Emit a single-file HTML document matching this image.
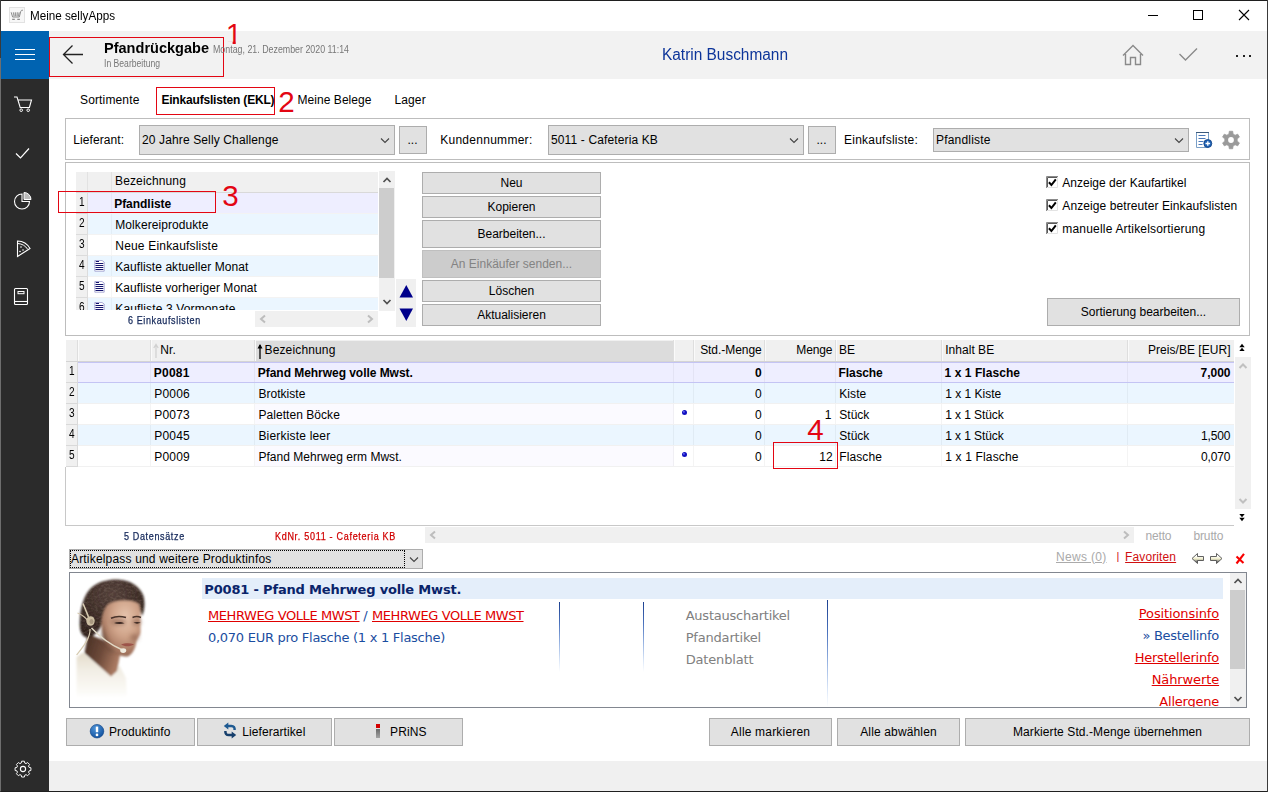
<!DOCTYPE html>
<html lang="de"><head><meta charset="utf-8"><title>Meine sellyApps</title>
<style>
html,body{margin:0;padding:0;}
body{width:1268px;height:792px;overflow:hidden;background:#fff;position:relative;font-family:"Liberation Sans",sans-serif;}
#w{position:absolute;left:0;top:0;width:1268px;height:792px;overflow:hidden;background:#fff;}
#w div,#w span,#w svg{position:absolute;box-sizing:border-box;}
.t{white-space:pre;}
.b{background:#e1e1e1;border:1px solid #adadad;}
.bd{background:#ccc;border:1px solid #bfbfbf;}
.rb{border:1px solid #e30613;}
.u{text-decoration:underline;}
</style></head>
<body><div id="w">
<div style="left:0px;top:0px;width:1268px;height:792px;background:#fff;"></div>
<div style="left:49px;top:31px;width:1218px;height:48px;background:#f2f2f2;"></div>
<div style="left:49px;top:761px;width:1218px;height:30px;background:#f0f0f0;"></div>
<div style="left:1px;top:31px;width:48px;height:48px;background:#0063b1;"></div>
<div style="left:1px;top:79px;width:48px;height:712px;background:#2b2b2b;"></div>
<div style="left:0px;top:0px;width:1268px;height:1px;background:#1f1f1f;"></div>
<div style="left:0px;top:791px;width:1268px;height:1px;background:#1f1f1f;"></div>
<div style="left:0px;top:0px;width:1px;height:792px;background:#3a3a3a;"></div>
<div style="left:0px;top:58px;width:1px;height:733px;background:#6e6e6e;"></div>
<div style="left:1267px;top:0px;width:1px;height:792px;background:#3a3a3a;"></div>
<svg style="left:9px;top:7px;" width="16" height="16" viewBox="0 0 16 16"><rect x="0.5" y="0.5" width="15" height="15" fill="#f7f7f7" stroke="#e2e2e2"/><path d="M14 3.300c-1.200-.2-2 .1-2.300 1.200L10.300 10H3.600L2.200 5.300" stroke="#8c8c8c" fill="none" stroke-width="1"/><path d="M4.300 5.300l.9 4M6.300 5.300l.3 4M8.300 5.300l-.2 4M10.200 5.300l-.8 4" stroke="#9a9a9a" fill="none" stroke-width="1.200"/><path d="M3.200 12.300h2.600M8.300 12.300h2.600" stroke="#8c8c8c" stroke-width="1.300"/></svg>
<span class="t" style="top:8.84px;font:12px/14px 'Liberation Sans',sans-serif;color:#000;left:30.00px;transform:scaleX(0.9728);transform-origin:0 0;">Meine sellyApps</span>
<svg style="left:1143px;top:5px;" width="20" height="20" viewBox="0 0 20 20"><path d="M5 10.5h10" stroke="#000" stroke-width="1"/></svg>
<svg style="left:1188px;top:5px;" width="20" height="20" viewBox="0 0 20 20"><rect x="5.5" y="5.5" width="9" height="9" fill="none" stroke="#000" stroke-width="1"/></svg>
<svg style="left:1234px;top:5px;" width="20" height="20" viewBox="0 0 20 20"><path d="M5 5l10 10M15 5l-10 10" stroke="#000" stroke-width="1.1"/></svg>
<div style="left:15px;top:49px;width:20px;height:1px;background:#fff;"></div>
<div style="left:15px;top:54px;width:20px;height:1px;background:#fff;"></div>
<div style="left:15px;top:59px;width:20px;height:1px;background:#fff;"></div>
<div class="rb" style="left:49px;top:37px;width:175px;height:40px;"></div>
<svg style="left:60px;top:42px;" width="26" height="24" viewBox="0 0 26 24"><path d="M23 12.5H4M12.5 3.5L3.5 12.5l9 9" fill="none" stroke="#222" stroke-width="1.3"/></svg>
<span class="t" style="top:38.80px;font:bold 15px/18px 'Liberation Sans',sans-serif;color:#000;left:104.00px;transform:scaleX(0.9690);transform-origin:0 0;">Pfandrückgabe</span>
<span class="t" style="top:57.36px;font:10.5px/13px 'Liberation Sans',sans-serif;color:#777;left:104.00px;transform:scaleX(0.8199);transform-origin:0 0;">In Bearbeitung</span>
<span class="t" style="top:43.36px;font:10.5px/13px 'Liberation Sans',sans-serif;color:#777;left:213.00px;transform:scaleX(0.8421);transform-origin:0 0;">Montag, 21. Dezember 2020 11:14</span>
<span class="t" style="top:45.36px;font:16px/19px 'Liberation Sans',sans-serif;color:#0d359a;left:662.00px;transform:scaleX(0.9638);transform-origin:0 0;">Katrin Buschmann</span>
<span class="t" style="top:16.40px;font:30px/36px 'Liberation Sans',sans-serif;color:#e30613;left:225.80px;clip-path:polygon(0 0,9.9px 0,9.9px 100%,6.8px 100%,6.8px 24.8px,0 24.8px);">1</span>
<svg style="left:1120px;top:42px;" width="26" height="26" viewBox="0 0 26 26"><path d="M3 13.5L13 3.5l10 10M5.5 12v10.5h5v-7h5v7h5V12" fill="none" stroke="#8a8a8a" stroke-width="1.4"/></svg>
<svg style="left:1176px;top:44px;" width="24" height="20" viewBox="0 0 24 20"><path d="M3.5 10l6 6L21 4.5" fill="none" stroke="#8a8a8a" stroke-width="1.4"/></svg>
<div style="left:1236px;top:55px;width:2px;height:2px;background:#222;"></div>
<div style="left:1243px;top:55px;width:2px;height:2px;background:#222;"></div>
<div style="left:1249px;top:55px;width:2px;height:2px;background:#222;"></div>
<svg style="left:12px;top:94px;" width="22" height="20" viewBox="0 0 22 20"><path d="M2 3h3l3.2 10.5h9.2L19.5 6H6.2" fill="none" stroke="#fff" stroke-width="1.1"/><circle cx="9.2" cy="16.2" r="1.3" fill="none" stroke="#fff" stroke-width="1"/><circle cx="16.2" cy="16.2" r="1.3" fill="none" stroke="#fff" stroke-width="1"/></svg>
<svg style="left:13px;top:144px;" width="20" height="18" viewBox="0 0 20 18"><path d="M3 9.5l4.5 4.5L16 4.5" fill="none" stroke="#fff" stroke-width="1.2"/></svg>
<svg style="left:12px;top:190px;" width="22" height="22" viewBox="0 0 22 22"><path d="M10 4a7.5 7.5 0 1 0 7.5 7.5H10z" fill="none" stroke="#fff" stroke-width="1.1"/><path d="M12 2.5a7 7 0 0 1 7 7h-7z" fill="#bbb" stroke="#fff" stroke-width="1"/></svg>
<svg style="left:14px;top:238px;" width="20" height="22" viewBox="0 0 20 22"><path d="M3.5 3c5.5 0.2 10 3 12.5 7.5L3.5 18.5z" fill="none" stroke="#fff" stroke-width="1.1"/><path d="M4 5.5c4 0.3 7.5 2.3 9.7 5.8" fill="none" stroke="#fff" stroke-width="1"/><circle cx="7" cy="9" r="0.8" fill="#fff"/><circle cx="9" cy="12" r="0.8" fill="#fff"/><circle cx="6" cy="13.5" r="0.8" fill="#fff"/></svg>
<svg style="left:12px;top:286px;" width="20" height="22" viewBox="0 0 20 22"><rect x="2.5" y="2.5" width="13" height="16" rx="1" fill="none" stroke="#fff" stroke-width="1.1"/><path d="M2.5 15.5h13" stroke="#fff" stroke-width="1.1"/><rect x="6" y="5.5" width="6" height="2.2" fill="none" stroke="#fff" stroke-width="1"/></svg>
<svg style="left:12px;top:758px;" width="22" height="22" viewBox="0 0 22 22"><path d="M9.3 2.5h3.4l.5 2.3 1.6.7 2-1.3 2.4 2.4-1.3 2 .7 1.6 2.3.5v3.4l-2.3.5-.7 1.6 1.3 2-2.4 2.4-2-1.3-1.6.7-.5 2.3H9.3l-.5-2.3-1.6-.7-2 1.3-2.4-2.4 1.3-2-.7-1.6-2.3-.5V10.700l2.3-.5.7-1.6-1.300-2 2.4-2.4 2 1.300 1.600-.7z" transform="translate(2.200,1.200) scale(0.8)" fill="none" stroke="#fff" stroke-width="1.2"/><circle cx="11" cy="11" r="2.600" fill="none" stroke="#fff" stroke-width="1.1"/></svg>
<span class="t" style="top:92.84px;font:12px/14px 'Liberation Sans',sans-serif;color:#000;letter-spacing:0.147px;left:80.00px;">Sortimente</span>
<div class="rb" style="left:156px;top:87px;width:119px;height:28px;"></div>
<span class="t" style="top:92.84px;font:bold 12px/14px 'Liberation Sans',sans-serif;color:#000;letter-spacing:-0.184px;left:161.40px;">Einkaufslisten (EKL)</span>
<span class="t" style="top:84.04px;font:29.6px/36px 'Liberation Sans',sans-serif;color:#e30613;left:278.20px;">2</span>
<span class="t" style="top:92.84px;font:12px/14px 'Liberation Sans',sans-serif;color:#000;letter-spacing:0.051px;left:297.50px;">Meine Belege</span>
<span class="t" style="top:92.84px;font:12px/14px 'Liberation Sans',sans-serif;color:#000;letter-spacing:0.142px;left:394.40px;">Lager</span>
<div style="left:65px;top:118px;width:1185px;height:42px;background:#fff;border:1px solid #bdbdbd;"></div>
<span class="t" style="top:132.54px;font:12px/14px 'Liberation Sans',sans-serif;color:#000;letter-spacing:0.097px;left:73.20px;">Lieferant:</span>
<div class="b" style="left:139px;top:125px;width:256px;height:30px;"></div>
<span class="t" style="top:133.14px;font:12px/14px 'Liberation Sans',sans-serif;color:#000;letter-spacing:0.128px;left:142.00px;">20 Jahre Selly Challenge</span>
<svg style="left:380px;top:137.0px;" width="10" height="7" viewBox="0 0 10 7"><path d="M1 1.500l4 4 4-4" fill="none" stroke="#444" stroke-width="1.100"/></svg>
<div class="b" style="left:399px;top:126px;width:28px;height:28px;"></div>
<span class="t" style="top:132.54px;font:12px/14px 'Liberation Sans',sans-serif;color:#000;left:407.50px;">...</span>
<span class="t" style="top:132.54px;font:12px/14px 'Liberation Sans',sans-serif;color:#000;letter-spacing:0.276px;left:440.20px;">Kundennummer:</span>
<div class="b" style="left:548px;top:125px;width:256px;height:30px;"></div>
<span class="t" style="top:133.14px;font:12px/14px 'Liberation Sans',sans-serif;color:#000;letter-spacing:0.131px;left:551.00px;">5011 - Cafeteria KB</span>
<svg style="left:789px;top:137.0px;" width="10" height="7" viewBox="0 0 10 7"><path d="M1 1.500l4 4 4-4" fill="none" stroke="#444" stroke-width="1.100"/></svg>
<div class="b" style="left:808px;top:126px;width:28px;height:28px;"></div>
<span class="t" style="top:132.54px;font:12px/14px 'Liberation Sans',sans-serif;color:#000;left:816.50px;">...</span>
<span class="t" style="top:132.54px;font:12px/14px 'Liberation Sans',sans-serif;color:#000;letter-spacing:0.236px;left:844.00px;">Einkaufsliste:</span>
<div class="b" style="left:933px;top:128px;width:256px;height:24px;"></div>
<span class="t" style="top:132.54px;font:12px/14px 'Liberation Sans',sans-serif;color:#000;letter-spacing:0.200px;left:936.00px;">Pfandliste</span>
<svg style="left:1174px;top:137.0px;" width="10" height="7" viewBox="0 0 10 7"><path d="M1 1.500l4 4 4-4" fill="none" stroke="#444" stroke-width="1.100"/></svg>
<div style="left:65px;top:162px;width:1185px;height:174px;background:#fff;border:1px solid #bdbdbd;"></div>
<div style="left:76px;top:172px;width:302px;height:20px;background:#f0f0f0;"></div>
<div style="left:76px;top:192px;width:302px;height:1px;background:#d9d9d9;"></div>
<div style="left:87px;top:172px;width:1px;height:20px;background:#e2e2e2;"></div>
<div style="left:111px;top:172px;width:1px;height:20px;background:#e2e2e2;"></div>
<span class="t" style="top:173.64px;font:12px/14px 'Liberation Sans',sans-serif;color:#000;letter-spacing:0.147px;left:115.00px;">Bezeichnung</span>
<div style="left:76px;top:193px;width:302px;height:117px;overflow:hidden">
<div style="left:0px;top:0px;width:302px;height:21px;background:#eeeeff;"></div>
<div style="left:0px;top:0px;width:12px;height:21px;background:#f0f0f0;border-right:1px solid #dcdcdc;border-bottom:1px solid #dcdcdc;"></div>
<div style="left:35px;top:0px;width:1px;height:21px;background:rgba(0,0,0,0.035);"></div>
<div style="left:12px;top:20px;width:290px;height:1px;background:#f3f3f3;"></div>
<span class="t" style="top:1.74px;font:12px/14px 'Liberation Sans',sans-serif;color:#000;left:2.90px;transform:scaleX(0.8400);transform-origin:0 0;">1</span>
<span class="t" style="top:3.64px;font:bold 12px/14px 'Liberation Sans',sans-serif;color:#000;letter-spacing:-0.035px;left:38.20px;">Pfandliste</span>
<div style="left:0px;top:21px;width:302px;height:21px;background:#ebf6ff;"></div>
<div style="left:0px;top:21px;width:12px;height:21px;background:#f0f0f0;border-right:1px solid #dcdcdc;border-bottom:1px solid #dcdcdc;"></div>
<div style="left:35px;top:21px;width:1px;height:21px;background:rgba(0,0,0,0.035);"></div>
<div style="left:12px;top:41px;width:290px;height:1px;background:#f3f3f3;"></div>
<span class="t" style="top:22.74px;font:12px/14px 'Liberation Sans',sans-serif;color:#000;left:2.90px;transform:scaleX(0.8400);transform-origin:0 0;">2</span>
<span class="t" style="top:24.64px;font:12px/14px 'Liberation Sans',sans-serif;color:#000;letter-spacing:0.072px;left:39.30px;">Molkereiprodukte</span>
<div style="left:0px;top:42px;width:302px;height:21px;background:#fff;"></div>
<div style="left:0px;top:42px;width:12px;height:21px;background:#f0f0f0;border-right:1px solid #dcdcdc;border-bottom:1px solid #dcdcdc;"></div>
<div style="left:35px;top:42px;width:1px;height:21px;background:rgba(0,0,0,0.035);"></div>
<div style="left:12px;top:62px;width:290px;height:1px;background:#f3f3f3;"></div>
<span class="t" style="top:43.74px;font:12px/14px 'Liberation Sans',sans-serif;color:#000;left:2.90px;transform:scaleX(0.8400);transform-origin:0 0;">3</span>
<span class="t" style="top:45.64px;font:12px/14px 'Liberation Sans',sans-serif;color:#000;letter-spacing:0.184px;left:39.30px;">Neue Einkaufsliste</span>
<div style="left:0px;top:63px;width:302px;height:21px;background:#ebf6ff;"></div>
<div style="left:0px;top:63px;width:12px;height:21px;background:#f0f0f0;border-right:1px solid #dcdcdc;border-bottom:1px solid #dcdcdc;"></div>
<div style="left:35px;top:63px;width:1px;height:21px;background:rgba(0,0,0,0.035);"></div>
<div style="left:12px;top:83px;width:290px;height:1px;background:#f3f3f3;"></div>
<span class="t" style="top:64.74px;font:12px/14px 'Liberation Sans',sans-serif;color:#000;left:2.90px;transform:scaleX(0.8400);transform-origin:0 0;">4</span>
<svg style="left:18px;top:67px;" width="11" height="12" viewBox="0 0 11 12"><path d="M0.800 0.500h7.200l2.200 1.500v9.200h-9.400z" fill="#fff" stroke="#8d8dc4" stroke-width="0.7"/><path d="M1.800 1.500h3.200M1.500 3.500h7.800M1.500 5.500h7.800M1.500 7.500h7.800M1.500 9.500h7.800" stroke="#14146e" stroke-width="1.150"/></svg>
<span class="t" style="top:66.64px;font:12px/14px 'Liberation Sans',sans-serif;color:#000;letter-spacing:0.072px;left:39.30px;">Kaufliste aktueller Monat</span>
<div style="left:0px;top:84px;width:302px;height:21px;background:#fff;"></div>
<div style="left:0px;top:84px;width:12px;height:21px;background:#f0f0f0;border-right:1px solid #dcdcdc;border-bottom:1px solid #dcdcdc;"></div>
<div style="left:35px;top:84px;width:1px;height:21px;background:rgba(0,0,0,0.035);"></div>
<div style="left:12px;top:104px;width:290px;height:1px;background:#f3f3f3;"></div>
<span class="t" style="top:85.74px;font:12px/14px 'Liberation Sans',sans-serif;color:#000;left:2.90px;transform:scaleX(0.8400);transform-origin:0 0;">5</span>
<svg style="left:18px;top:88px;" width="11" height="12" viewBox="0 0 11 12"><path d="M0.800 0.500h7.200l2.200 1.500v9.200h-9.400z" fill="#fff" stroke="#8d8dc4" stroke-width="0.7"/><path d="M1.800 1.500h3.200M1.500 3.500h7.800M1.500 5.500h7.800M1.500 7.500h7.800M1.500 9.500h7.800" stroke="#14146e" stroke-width="1.150"/></svg>
<span class="t" style="top:87.64px;font:12px/14px 'Liberation Sans',sans-serif;color:#000;letter-spacing:0.063px;left:39.30px;">Kaufliste vorheriger Monat</span>
<div style="left:0px;top:105px;width:302px;height:21px;background:#ebf6ff;"></div>
<div style="left:0px;top:105px;width:12px;height:21px;background:#f0f0f0;border-right:1px solid #dcdcdc;border-bottom:1px solid #dcdcdc;"></div>
<div style="left:35px;top:105px;width:1px;height:21px;background:rgba(0,0,0,0.035);"></div>
<div style="left:12px;top:125px;width:290px;height:1px;background:#f3f3f3;"></div>
<span class="t" style="top:106.74px;font:12px/14px 'Liberation Sans',sans-serif;color:#000;left:2.90px;transform:scaleX(0.8400);transform-origin:0 0;">6</span>
<svg style="left:18px;top:109px;" width="11" height="12" viewBox="0 0 11 12"><path d="M0.800 0.500h7.200l2.200 1.500v9.200h-9.400z" fill="#fff" stroke="#8d8dc4" stroke-width="0.7"/><path d="M1.800 1.500h3.200M1.500 3.500h7.800M1.500 5.500h7.800M1.500 7.500h7.800M1.500 9.500h7.800" stroke="#14146e" stroke-width="1.150"/></svg>
<span class="t" style="top:108.64px;font:12px/14px 'Liberation Sans',sans-serif;color:#000;letter-spacing:0.133px;left:39.30px;">Kaufliste 3 Vormonate</span>
</div>
<div style="left:379px;top:171px;width:16px;height:140px;background:#f0f0f0;"></div>
<div style="left:379px;top:188px;width:15px;height:90px;background:#cdcdcd;"></div>
<svg style="left:382px;top:176px;" width="10" height="8" viewBox="0 0 10 8"><path d="M1.500 6l3.500-3.500L8.500 6" fill="none" stroke="#505050" stroke-width="1.700"/></svg>
<svg style="left:382px;top:298px;" width="10" height="8" viewBox="0 0 10 8"><path d="M1.500 2l3.500 3.500L8.500 2" fill="none" stroke="#505050" stroke-width="1.700"/></svg>
<div style="left:255px;top:311px;width:123px;height:16px;background:#f0f0f0;"></div>
<svg style="left:259px;top:314px;" width="8" height="10" viewBox="0 0 8 10"><path d="M6 1.500L2 5l4 3.500" fill="none" stroke="#bdbdbd" stroke-width="2"/></svg>
<svg style="left:366px;top:314px;" width="8" height="10" viewBox="0 0 8 10"><path d="M2 1.500L6 5l-4 3.500" fill="none" stroke="#bdbdbd" stroke-width="2"/></svg>
<span class="t" style="top:315.13px;font:10px/12px 'Liberation Sans',sans-serif;color:#14285a;letter-spacing:0.678px;left:127.80px;-webkit-text-stroke:0.25px #14285a;transform:scaleX(0.9);transform-origin:0 0;">6 Einkaufslisten</span>
<div class="rb" style="left:58px;top:191px;width:158px;height:22px;"></div>
<span class="t" style="top:178.14px;font:29.6px/36px 'Liberation Sans',sans-serif;color:#e30613;left:222.30px;">3</span>
<div style="left:396px;top:279px;width:20px;height:48px;background:#f0f0f0;"></div>
<svg style="left:396px;top:279px;" width="20" height="48" viewBox="0 0 20 48"><path d="M10.3 6L17 18.500H3.500z" fill="#00008b"/><path d="M10.300 42L17 29.500H3.500z" fill="#00008b"/></svg>
<div class="b" style="left:422px;top:172px;width:179px;height:22px;"></div>
<span class="t" style="top:176.14px;font:12px/14px 'Liberation Sans',sans-serif;color:#000;left:500.49px;">Neu</span>
<div class="b" style="left:422px;top:196px;width:179px;height:22px;"></div>
<span class="t" style="top:200.14px;font:12px/14px 'Liberation Sans',sans-serif;color:#000;left:487.48px;">Kopieren</span>
<div class="b" style="left:422px;top:220px;width:179px;height:28px;"></div>
<span class="t" style="top:227.14px;font:12px/14px 'Liberation Sans',sans-serif;color:#000;left:477.48px;">Bearbeiten...</span>
<div class="bd" style="left:422px;top:250px;width:179px;height:28px;"></div>
<span class="t" style="top:257.14px;font:12px/14px 'Liberation Sans',sans-serif;color:#838383;left:450.79px;">An Einkäufer senden...</span>
<div class="b" style="left:422px;top:280px;width:179px;height:22px;"></div>
<span class="t" style="top:284.14px;font:12px/14px 'Liberation Sans',sans-serif;color:#000;left:488.82px;">Löschen</span>
<div class="b" style="left:422px;top:304px;width:179px;height:22px;"></div>
<span class="t" style="top:308.14px;font:12px/14px 'Liberation Sans',sans-serif;color:#000;left:477.15px;">Aktualisieren</span>
<div class="b" style="left:1047px;top:298px;width:193px;height:28px;"></div>
<span class="t" style="top:305.14px;font:12px/14px 'Liberation Sans',sans-serif;color:#000;left:1080.79px;">Sortierung bearbeiten...</span>
<svg style="left:1046px;top:176px;" width="12" height="12" viewBox="0 0 12 12"><rect x="0" y="0" width="12" height="12" fill="#fff"/><path d="M0.500 12V0.500H12" fill="none" stroke="#8a8a8a"/><path d="M1.500 11V1.500H11" fill="none" stroke="#5a5a5a"/><path d="M1 11.500H11.500V1" fill="none" stroke="#e3e3e3"/><path d="M2.900 6.300l2.500 2.700L9.800 3.300" fill="none" stroke="#000" stroke-width="2"/></svg>
<span class="t" style="top:175.84px;font:12px/14px 'Liberation Sans',sans-serif;color:#000;left:1062.30px;">Anzeige der Kaufartikel</span>
<svg style="left:1046px;top:199px;" width="12" height="12" viewBox="0 0 12 12"><rect x="0" y="0" width="12" height="12" fill="#fff"/><path d="M0.500 12V0.500H12" fill="none" stroke="#8a8a8a"/><path d="M1.500 11V1.500H11" fill="none" stroke="#5a5a5a"/><path d="M1 11.500H11.500V1" fill="none" stroke="#e3e3e3"/><path d="M2.900 6.300l2.500 2.700L9.800 3.300" fill="none" stroke="#000" stroke-width="2"/></svg>
<span class="t" style="top:198.84px;font:12px/14px 'Liberation Sans',sans-serif;color:#000;letter-spacing:0.091px;left:1062.30px;">Anzeige betreuter Einkaufslisten</span>
<svg style="left:1046px;top:222px;" width="12" height="12" viewBox="0 0 12 12"><rect x="0" y="0" width="12" height="12" fill="#fff"/><path d="M0.500 12V0.500H12" fill="none" stroke="#8a8a8a"/><path d="M1.500 11V1.500H11" fill="none" stroke="#5a5a5a"/><path d="M1 11.500H11.500V1" fill="none" stroke="#e3e3e3"/><path d="M2.900 6.300l2.500 2.700L9.800 3.300" fill="none" stroke="#000" stroke-width="2"/></svg>
<span class="t" style="top:221.84px;font:12px/14px 'Liberation Sans',sans-serif;color:#000;letter-spacing:0.190px;left:1062.30px;">manuelle Artikelsortierung</span>
<svg style="left:1195px;top:131px;" width="18" height="18" viewBox="0 0 18 18"><path d="M1.500 1.500h12v15h-12z" fill="#fff" stroke="#7aa0c8" stroke-width="1"/><path d="M1 1.500h13" stroke="#3c5a7c" stroke-width="1"/><path d="M3.500 4.500h7M3.500 7.500h7M3.500 10.500h5M3.500 13.500h4" stroke="#4a78b8" stroke-width="1"/><circle cx="12.800" cy="12.500" r="4" fill="#1e62b5" stroke="#0f3f80" stroke-width="0.8"/><path d="M12.800 10.200v4.600M10.500 12.500h4.600" stroke="#fff" stroke-width="1.300"/></svg>
<svg style="left:1221px;top:130px;" width="20" height="20" viewBox="0 0 20 20"><path d="M12.05 4.04L11.70 1.26L8.30 1.26L7.95 4.04L5.87 5.25L3.28 4.16L1.58 7.10L3.82 8.80L3.82 11.20L1.58 12.90L3.28 15.84L5.87 14.75L7.95 15.96L8.30 18.74L11.70 18.74L12.05 15.96L14.13 14.75L16.72 15.84L18.42 12.90L16.18 11.20L16.18 8.80L18.42 7.10L16.72 4.16L14.13 5.25Z" fill="#9a9a9a" stroke="#9a9a9a" stroke-width="0.8" stroke-linejoin="round"/><circle cx="10" cy="10" r="2.9" fill="#fff"/></svg>
<div style="left:66px;top:340px;width:1168px;height:22px;background:#f0f0f0;"></div>
<div style="left:255px;top:341px;width:419px;height:21px;background:#dcdcdc;"></div>
<div style="left:77px;top:340px;width:1px;height:21px;background:#dedede;"></div>
<div style="left:78px;top:340px;width:1px;height:21px;background:#fafafa;"></div>
<div style="left:150px;top:340px;width:1px;height:21px;background:#dedede;"></div>
<div style="left:151px;top:340px;width:1px;height:21px;background:#fafafa;"></div>
<div style="left:254px;top:340px;width:1px;height:21px;background:#dedede;"></div>
<div style="left:255px;top:340px;width:1px;height:21px;background:#fafafa;"></div>
<div style="left:673px;top:340px;width:1px;height:21px;background:#dedede;"></div>
<div style="left:674px;top:340px;width:1px;height:21px;background:#fafafa;"></div>
<div style="left:693px;top:340px;width:1px;height:21px;background:#dedede;"></div>
<div style="left:694px;top:340px;width:1px;height:21px;background:#fafafa;"></div>
<div style="left:764px;top:340px;width:1px;height:21px;background:#dedede;"></div>
<div style="left:765px;top:340px;width:1px;height:21px;background:#fafafa;"></div>
<div style="left:835px;top:340px;width:1px;height:21px;background:#dedede;"></div>
<div style="left:836px;top:340px;width:1px;height:21px;background:#fafafa;"></div>
<div style="left:941px;top:340px;width:1px;height:21px;background:#dedede;"></div>
<div style="left:942px;top:340px;width:1px;height:21px;background:#fafafa;"></div>
<div style="left:1127px;top:340px;width:1px;height:21px;background:#dedede;"></div>
<div style="left:1128px;top:340px;width:1px;height:21px;background:#fafafa;"></div>
<div style="left:66px;top:361px;width:1168px;height:1px;background:#d4d4d4;"></div>
<svg style="left:153px;top:343px;" width="6" height="16" viewBox="0 0 6 16"><path d="M3 2v13M0.800 5L3 1.500 5.200 5" fill="none" stroke="#d0d0d0" stroke-width="1.200"/></svg>
<svg style="left:256.5px;top:343px;" width="6" height="17" viewBox="0 0 6 17"><path d="M3 2v14" stroke="#000" stroke-width="1.300"/><path d="M0.500 5.500L3 1l2.500 4.500z" fill="#000"/></svg>
<span class="t" style="top:342.84px;font:12px/14px 'Liberation Sans',sans-serif;color:#000;letter-spacing:0.055px;left:160.30px;">Nr.</span>
<span class="t" style="top:342.84px;font:12px/14px 'Liberation Sans',sans-serif;color:#000;letter-spacing:0.147px;left:264.50px;">Bezeichnung</span>
<span class="t" style="top:343.14px;font:12px/14px 'Liberation Sans',sans-serif;color:#000;letter-spacing:-0.053px;right:506.35px;">Std.-Menge</span>
<span class="t" style="top:343.14px;font:12px/14px 'Liberation Sans',sans-serif;color:#000;letter-spacing:-0.138px;right:435.64px;">Menge</span>
<span class="t" style="top:343.14px;font:12px/14px 'Liberation Sans',sans-serif;color:#000;left:839.00px;">BE</span>
<span class="t" style="top:343.14px;font:12px/14px 'Liberation Sans',sans-serif;color:#000;letter-spacing:0.034px;left:945.20px;">Inhalt BE</span>
<span class="t" style="top:343.14px;font:12px/14px 'Liberation Sans',sans-serif;color:#000;letter-spacing:0.034px;right:37.47px;">Preis/BE [EUR]</span>
<div style="left:66px;top:362px;width:1168px;height:21px;background:#eeeeff;"></div>
<div style="left:77px;top:362px;width:1px;height:21px;background:rgba(0,0,0,0.045);"></div>
<div style="left:150px;top:362px;width:1px;height:21px;background:rgba(0,0,0,0.045);"></div>
<div style="left:254px;top:362px;width:1px;height:21px;background:rgba(0,0,0,0.045);"></div>
<div style="left:673px;top:362px;width:1px;height:21px;background:rgba(0,0,0,0.045);"></div>
<div style="left:693px;top:362px;width:1px;height:21px;background:rgba(0,0,0,0.045);"></div>
<div style="left:764px;top:362px;width:1px;height:21px;background:rgba(0,0,0,0.045);"></div>
<div style="left:835px;top:362px;width:1px;height:21px;background:rgba(0,0,0,0.045);"></div>
<div style="left:941px;top:362px;width:1px;height:21px;background:rgba(0,0,0,0.045);"></div>
<div style="left:1127px;top:362px;width:1px;height:21px;background:rgba(0,0,0,0.045);"></div>
<div style="left:66px;top:382px;width:1168px;height:1px;background:#f1f1f1;"></div>
<div style="left:66px;top:362px;width:12px;height:21px;background:#f0f0f0;border-right:1px solid #d9d9d9;border-bottom:1px solid #d9d9d9;"></div>
<div style="left:78px;top:362px;width:1156px;height:1px;background:#c4c4f4;"></div>
<div style="left:78px;top:382px;width:1156px;height:1px;background:#c4c4f4;"></div>
<span class="t" style="top:363.74px;font:12px/14px 'Liberation Sans',sans-serif;color:#000;left:68.70px;transform:scaleX(0.8400);transform-origin:0 0;">1</span>
<span class="t" style="top:366.34px;font:bold 12px/14px 'Liberation Sans',sans-serif;color:#000;letter-spacing:0.260px;left:153.70px;">P0081</span>
<span class="t" style="top:366.34px;font:bold 12px/14px 'Liberation Sans',sans-serif;color:#000;letter-spacing:-0.041px;left:257.80px;">Pfand Mehrweg volle Mwst.</span>
<span class="t" style="top:366.34px;font:bold 12px/14px 'Liberation Sans',sans-serif;color:#000;right:506.40px;">0</span>
<span class="t" style="top:366.34px;font:bold 12px/14px 'Liberation Sans',sans-serif;color:#000;letter-spacing:-0.084px;left:838.60px;">Flasche</span>
<span class="t" style="top:366.34px;font:bold 12px/14px 'Liberation Sans',sans-serif;color:#000;letter-spacing:0.061px;left:944.50px;">1 x 1 Flasche</span>
<span class="t" style="top:366.34px;font:bold 12px/14px 'Liberation Sans',sans-serif;color:#000;letter-spacing:-0.006px;right:37.51px;">7,000</span>
<div style="left:66px;top:383px;width:1168px;height:21px;background:#ebf6ff;"></div>
<div style="left:77px;top:383px;width:1px;height:21px;background:rgba(0,0,0,0.045);"></div>
<div style="left:150px;top:383px;width:1px;height:21px;background:rgba(0,0,0,0.045);"></div>
<div style="left:254px;top:383px;width:1px;height:21px;background:rgba(0,0,0,0.045);"></div>
<div style="left:673px;top:383px;width:1px;height:21px;background:rgba(0,0,0,0.045);"></div>
<div style="left:693px;top:383px;width:1px;height:21px;background:rgba(0,0,0,0.045);"></div>
<div style="left:764px;top:383px;width:1px;height:21px;background:rgba(0,0,0,0.045);"></div>
<div style="left:835px;top:383px;width:1px;height:21px;background:rgba(0,0,0,0.045);"></div>
<div style="left:941px;top:383px;width:1px;height:21px;background:rgba(0,0,0,0.045);"></div>
<div style="left:1127px;top:383px;width:1px;height:21px;background:rgba(0,0,0,0.045);"></div>
<div style="left:66px;top:403px;width:1168px;height:1px;background:#f1f1f1;"></div>
<div style="left:66px;top:383px;width:12px;height:21px;background:#f0f0f0;border-right:1px solid #d9d9d9;border-bottom:1px solid #d9d9d9;"></div>
<span class="t" style="top:384.74px;font:12px/14px 'Liberation Sans',sans-serif;color:#000;left:68.70px;transform:scaleX(0.8400);transform-origin:0 0;">2</span>
<span class="t" style="top:387.34px;font:12px/14px 'Liberation Sans',sans-serif;color:#000;letter-spacing:0.160px;left:154.30px;">P0006</span>
<span class="t" style="top:387.34px;font:12px/14px 'Liberation Sans',sans-serif;color:#000;letter-spacing:0.035px;left:258.40px;">Brotkiste</span>
<span class="t" style="top:387.34px;font:12px/14px 'Liberation Sans',sans-serif;color:#000;right:506.40px;">0</span>
<span class="t" style="top:387.34px;font:12px/14px 'Liberation Sans',sans-serif;color:#000;letter-spacing:0.064px;left:839.30px;">Kiste</span>
<span class="t" style="top:387.34px;font:12px/14px 'Liberation Sans',sans-serif;color:#000;left:945.20px;">1 x 1 Kiste</span>
<div style="left:66px;top:404px;width:1168px;height:21px;background:#fff;"></div>
<div style="left:255px;top:404px;width:419px;height:21px;background:#fbfaff;"></div>
<div style="left:77px;top:404px;width:1px;height:21px;background:rgba(0,0,0,0.045);"></div>
<div style="left:150px;top:404px;width:1px;height:21px;background:rgba(0,0,0,0.045);"></div>
<div style="left:254px;top:404px;width:1px;height:21px;background:rgba(0,0,0,0.045);"></div>
<div style="left:673px;top:404px;width:1px;height:21px;background:rgba(0,0,0,0.045);"></div>
<div style="left:693px;top:404px;width:1px;height:21px;background:rgba(0,0,0,0.045);"></div>
<div style="left:764px;top:404px;width:1px;height:21px;background:rgba(0,0,0,0.045);"></div>
<div style="left:835px;top:404px;width:1px;height:21px;background:rgba(0,0,0,0.045);"></div>
<div style="left:941px;top:404px;width:1px;height:21px;background:rgba(0,0,0,0.045);"></div>
<div style="left:1127px;top:404px;width:1px;height:21px;background:rgba(0,0,0,0.045);"></div>
<div style="left:66px;top:424px;width:1168px;height:1px;background:#f1f1f1;"></div>
<div style="left:66px;top:404px;width:12px;height:21px;background:#f0f0f0;border-right:1px solid #d9d9d9;border-bottom:1px solid #d9d9d9;"></div>
<span class="t" style="top:405.74px;font:12px/14px 'Liberation Sans',sans-serif;color:#000;left:68.70px;transform:scaleX(0.8400);transform-origin:0 0;">3</span>
<span class="t" style="top:408.34px;font:12px/14px 'Liberation Sans',sans-serif;color:#000;letter-spacing:0.160px;left:154.30px;">P0073</span>
<span class="t" style="top:408.34px;font:12px/14px 'Liberation Sans',sans-serif;color:#000;letter-spacing:0.056px;left:258.40px;">Paletten Böcke</span>
<svg style="left:681px;top:409px;" width="8" height="8" viewBox="0 0 8 8"><circle cx="3.500" cy="3.500" r="2.500" fill="#1010c0"/><circle cx="2.900" cy="2.900" r="0.800" fill="#7f7fff"/></svg>
<span class="t" style="top:408.34px;font:12px/14px 'Liberation Sans',sans-serif;color:#000;right:506.40px;">0</span>
<span class="t" style="top:408.34px;font:12px/14px 'Liberation Sans',sans-serif;color:#000;right:436.50px;">1</span>
<span class="t" style="top:408.34px;font:12px/14px 'Liberation Sans',sans-serif;color:#000;left:839.30px;">Stück</span>
<span class="t" style="top:408.34px;font:12px/14px 'Liberation Sans',sans-serif;color:#000;letter-spacing:-0.078px;left:945.20px;">1 x 1 Stück</span>
<div style="left:66px;top:425px;width:1168px;height:21px;background:#ebf6ff;"></div>
<div style="left:77px;top:425px;width:1px;height:21px;background:rgba(0,0,0,0.045);"></div>
<div style="left:150px;top:425px;width:1px;height:21px;background:rgba(0,0,0,0.045);"></div>
<div style="left:254px;top:425px;width:1px;height:21px;background:rgba(0,0,0,0.045);"></div>
<div style="left:673px;top:425px;width:1px;height:21px;background:rgba(0,0,0,0.045);"></div>
<div style="left:693px;top:425px;width:1px;height:21px;background:rgba(0,0,0,0.045);"></div>
<div style="left:764px;top:425px;width:1px;height:21px;background:rgba(0,0,0,0.045);"></div>
<div style="left:835px;top:425px;width:1px;height:21px;background:rgba(0,0,0,0.045);"></div>
<div style="left:941px;top:425px;width:1px;height:21px;background:rgba(0,0,0,0.045);"></div>
<div style="left:1127px;top:425px;width:1px;height:21px;background:rgba(0,0,0,0.045);"></div>
<div style="left:66px;top:445px;width:1168px;height:1px;background:#f1f1f1;"></div>
<div style="left:66px;top:425px;width:12px;height:21px;background:#f0f0f0;border-right:1px solid #d9d9d9;border-bottom:1px solid #d9d9d9;"></div>
<span class="t" style="top:426.74px;font:12px/14px 'Liberation Sans',sans-serif;color:#000;left:68.70px;transform:scaleX(0.8400);transform-origin:0 0;">4</span>
<span class="t" style="top:429.34px;font:12px/14px 'Liberation Sans',sans-serif;color:#000;letter-spacing:0.160px;left:154.30px;">P0045</span>
<span class="t" style="top:429.34px;font:12px/14px 'Liberation Sans',sans-serif;color:#000;letter-spacing:0.189px;left:258.40px;">Bierkiste leer</span>
<span class="t" style="top:429.34px;font:12px/14px 'Liberation Sans',sans-serif;color:#000;right:506.40px;">0</span>
<span class="t" style="top:429.34px;font:12px/14px 'Liberation Sans',sans-serif;color:#000;left:839.30px;">Stück</span>
<span class="t" style="top:429.34px;font:12px/14px 'Liberation Sans',sans-serif;color:#000;letter-spacing:-0.078px;left:945.20px;">1 x 1 Stück</span>
<span class="t" style="top:429.34px;font:12px/14px 'Liberation Sans',sans-serif;color:#000;letter-spacing:-0.106px;right:37.61px;">1,500</span>
<div style="left:66px;top:446px;width:1168px;height:21px;background:#fff;"></div>
<div style="left:255px;top:446px;width:419px;height:21px;background:#fbfaff;"></div>
<div style="left:77px;top:446px;width:1px;height:21px;background:rgba(0,0,0,0.045);"></div>
<div style="left:150px;top:446px;width:1px;height:21px;background:rgba(0,0,0,0.045);"></div>
<div style="left:254px;top:446px;width:1px;height:21px;background:rgba(0,0,0,0.045);"></div>
<div style="left:673px;top:446px;width:1px;height:21px;background:rgba(0,0,0,0.045);"></div>
<div style="left:693px;top:446px;width:1px;height:21px;background:rgba(0,0,0,0.045);"></div>
<div style="left:764px;top:446px;width:1px;height:21px;background:rgba(0,0,0,0.045);"></div>
<div style="left:835px;top:446px;width:1px;height:21px;background:rgba(0,0,0,0.045);"></div>
<div style="left:941px;top:446px;width:1px;height:21px;background:rgba(0,0,0,0.045);"></div>
<div style="left:1127px;top:446px;width:1px;height:21px;background:rgba(0,0,0,0.045);"></div>
<div style="left:66px;top:466px;width:1168px;height:1px;background:#f1f1f1;"></div>
<div style="left:66px;top:446px;width:12px;height:21px;background:#f0f0f0;border-right:1px solid #d9d9d9;border-bottom:1px solid #d9d9d9;"></div>
<span class="t" style="top:447.74px;font:12px/14px 'Liberation Sans',sans-serif;color:#000;left:68.70px;transform:scaleX(0.8400);transform-origin:0 0;">5</span>
<span class="t" style="top:450.34px;font:12px/14px 'Liberation Sans',sans-serif;color:#000;letter-spacing:0.160px;left:154.30px;">P0009</span>
<span class="t" style="top:450.34px;font:12px/14px 'Liberation Sans',sans-serif;color:#000;letter-spacing:0.034px;left:258.40px;">Pfand Mehrweg erm Mwst.</span>
<svg style="left:681px;top:451px;" width="8" height="8" viewBox="0 0 8 8"><circle cx="3.500" cy="3.500" r="2.500" fill="#1010c0"/><circle cx="2.900" cy="2.900" r="0.800" fill="#7f7fff"/></svg>
<span class="t" style="top:450.34px;font:12px/14px 'Liberation Sans',sans-serif;color:#000;right:506.40px;">0</span>
<span class="t" style="top:450.34px;font:12px/14px 'Liberation Sans',sans-serif;color:#000;letter-spacing:0.126px;right:435.17px;">12</span>
<span class="t" style="top:450.34px;font:12px/14px 'Liberation Sans',sans-serif;color:#000;letter-spacing:0.083px;left:839.30px;">Flasche</span>
<span class="t" style="top:450.34px;font:12px/14px 'Liberation Sans',sans-serif;color:#000;letter-spacing:0.164px;left:945.20px;">1 x 1 Flasche</span>
<span class="t" style="top:450.34px;font:12px/14px 'Liberation Sans',sans-serif;color:#000;letter-spacing:-0.106px;right:37.61px;">0,070</span>
<div style="left:65px;top:467px;width:1px;height:59px;background:#c8c8c8;"></div>
<div style="left:65px;top:525px;width:1169px;height:1px;background:#c8c8c8;"></div>
<div style="left:1235px;top:357px;width:16px;height:152px;background:#f0f0f0;"></div>
<svg style="left:1238px;top:362px;" width="10" height="8" viewBox="0 0 10 8"><path d="M1.500 6l3.500-3.500L8.500 6" fill="none" stroke="#c0c0c0" stroke-width="2"/></svg>
<svg style="left:1238px;top:497px;" width="10" height="8" viewBox="0 0 10 8"><path d="M1.500 2l3.500 3.500L8.500 2" fill="none" stroke="#c0c0c0" stroke-width="2"/></svg>
<svg style="left:1237.4px;top:343px;" width="10" height="10" viewBox="0 0 10 10"><path d="M5 0.800L7.700 4.300H2.300z M5 4.800L7.700 8H2.300z" fill="#000"/></svg>
<svg style="left:1237.4px;top:513px;" width="10" height="10" viewBox="0 0 10 10"><path d="M5 8.200L7.700 4.700H2.300z M5 4.200L7.700 1H2.300z" fill="#000"/></svg>
<div class="rb" style="left:773px;top:442px;width:65px;height:27px;"></div>
<span class="t" style="top:412.24px;font:29.6px/36px 'Liberation Sans',sans-serif;color:#e30613;left:807.30px;">4</span>
<span class="t" style="top:530.54px;font:10px/12px 'Liberation Sans',sans-serif;color:#14285a;letter-spacing:0.719px;left:124.00px;-webkit-text-stroke:0.25px #14285a;transform:scaleX(0.9);transform-origin:0 0;">5 Datensätze</span>
<span class="t" style="top:530.54px;font:10px/12px 'Liberation Sans',sans-serif;color:#d00000;letter-spacing:0.783px;left:274.50px;-webkit-text-stroke:0.25px #d00000;transform:scaleX(0.9);transform-origin:0 0;">KdNr. 5011 - Cafeteria KB</span>
<div style="left:425px;top:527px;width:709px;height:16px;background:#f0f0f0;"></div>
<svg style="left:429px;top:530px;" width="8" height="10" viewBox="0 0 8 10"><path d="M6 1.500L2 5l4 3.500" fill="none" stroke="#bdbdbd" stroke-width="2"/></svg>
<svg style="left:1122px;top:530px;" width="8" height="10" viewBox="0 0 8 10"><path d="M2 1.500L6 5l-4 3.500" fill="none" stroke="#bdbdbd" stroke-width="2"/></svg>
<span class="t" style="top:528.64px;font:12px/14px 'Liberation Sans',sans-serif;color:#aaa;letter-spacing:-0.138px;left:1145.40px;">netto</span>
<span class="t" style="top:528.64px;font:12px/14px 'Liberation Sans',sans-serif;color:#aaa;letter-spacing:-0.114px;left:1193.40px;">brutto</span>
<div class="b" style="left:69px;top:549px;width:354px;height:20px;"></div>
<div style="left:70px;top:550px;width:335px;height:18px;border:1px dotted #000;"></div>
<span class="t" style="top:551.84px;font:12px/14px 'Liberation Sans',sans-serif;color:#000;letter-spacing:0.178px;left:71.00px;">Artikelpass und weitere Produktinfos</span>
<svg style="left:409px;top:556px;" width="10" height="7" viewBox="0 0 10 7"><path d="M1 1.500l4 4 4-4" fill="none" stroke="#444" stroke-width="1.100"/></svg>
<span class="t" style="top:549.74px;font:12px/14px 'Liberation Sans',sans-serif;color:#aaa;letter-spacing:0.312px;left:1056.00px;text-decoration:underline;">News (0)</span>
<span class="t" style="top:549.69px;font:11px/13px 'Liberation Sans',sans-serif;color:#d01010;left:1116.50px;">|</span>
<span class="t" style="top:549.74px;font:12px/14px 'Liberation Sans',sans-serif;color:#d01010;letter-spacing:0.109px;left:1125.10px;text-decoration:underline;">Favoriten</span>
<svg style="left:1191px;top:552px;" width="14" height="13" viewBox="0 0 14 13"><defs><linearGradient id="ag" x1="0" y1="0" x2="0" y2="1"><stop offset="0.25" stop-color="#fff"/><stop offset="0.55" stop-color="#eeecc8"/><stop offset="0.8" stop-color="#777"/></linearGradient></defs><path d="M1 6.500L6.500 1.500v3h6v4h-6v3z" fill="url(#ag)" stroke="#505050" stroke-width="0.9"/></svg>
<svg style="left:1209px;top:552px;" width="14" height="13" viewBox="0 0 14 13"><g transform="translate(14,0) scale(-1,1)"><path d="M1 6.500L6.500 1.500v3h6v4h-6v3z" fill="url(#ag)" stroke="#505050" stroke-width="0.9"/></g></svg>
<svg style="left:1234px;top:552px;" width="12" height="13" viewBox="0 0 12 13"><path d="M2.500 4.500l7 6.500M10 1.800L2.500 11.500" fill="none" stroke="#f80000" stroke-width="2.100"/></svg>
<div style="left:69px;top:572px;width:1178px;height:136px;background:#fff;border:1px solid #828790;"></div>
<div style="left:70px;top:573px;width:1176px;height:134px;overflow:hidden">
<div style="left:132px;top:5px;width:1021px;height:21px;background:#e4eefa;"></div>
<span class="t" style="top:9.20px;font:bold 13px/16px 'DejaVu Sans','Liberation Sans',sans-serif;color:#0a246a;letter-spacing:-0.175px;left:134.30px;">P0081 - Pfand Mehrweg volle Mwst.</span>
<span class="t" style="top:34.50px;font:13px/16px 'DejaVu Sans','Liberation Sans',sans-serif;color:#e00000;letter-spacing:-0.415px;left:138.00px;text-decoration:underline;">MEHRWEG VOLLE MWST</span>
<span class="t" style="top:34.50px;font:13px/16px 'DejaVu Sans','Liberation Sans',sans-serif;color:#1a4da0;left:293.30px;">/</span>
<span class="t" style="top:34.50px;font:13px/16px 'DejaVu Sans','Liberation Sans',sans-serif;color:#e00000;letter-spacing:-0.415px;left:302.00px;text-decoration:underline;">MEHRWEG VOLLE MWST</span>
<span class="t" style="top:56.50px;font:13px/16px 'DejaVu Sans','Liberation Sans',sans-serif;color:#1a4da0;letter-spacing:-0.270px;left:138.00px;">0,070 EUR pro Flasche (1 x 1 Flasche)</span>
<span class="t" style="top:34.50px;font:13px/16px 'DejaVu Sans','Liberation Sans',sans-serif;color:#808080;letter-spacing:-0.235px;left:615.70px;">Austauschartikel</span>
<span class="t" style="top:56.50px;font:13px/16px 'DejaVu Sans','Liberation Sans',sans-serif;color:#808080;letter-spacing:-0.189px;left:615.70px;">Pfandartikel</span>
<span class="t" style="top:78.50px;font:13px/16px 'DejaVu Sans','Liberation Sans',sans-serif;color:#808080;letter-spacing:-0.164px;left:615.70px;">Datenblatt</span>
<span class="t" style="top:33.00px;font:13px/16px 'DejaVu Sans','Liberation Sans',sans-serif;color:#e00000;letter-spacing:-0.113px;right:26.91px;text-decoration:underline;">Positionsinfo</span>
<span class="t" style="top:54.55px;font:13px/16px 'DejaVu Sans','Liberation Sans',sans-serif;color:#1a4da0;letter-spacing:-0.321px;right:27.12px;">» Bestellinfo</span>
<span class="t" style="top:76.70px;font:13px/16px 'DejaVu Sans','Liberation Sans',sans-serif;color:#e00000;letter-spacing:-0.260px;right:27.06px;text-decoration:underline;">Herstellerinfo</span>
<span class="t" style="top:98.85px;font:13px/16px 'DejaVu Sans','Liberation Sans',sans-serif;color:#e00000;letter-spacing:-0.105px;right:26.91px;text-decoration:underline;">Nährwerte</span>
<span class="t" style="top:121.00px;font:13px/16px 'DejaVu Sans','Liberation Sans',sans-serif;color:#e00000;letter-spacing:-0.235px;right:27.04px;text-decoration:underline;">Allergene</span>
<div style="left:489px;top:29px;width:1px;height:70px;background:linear-gradient(to bottom,#1b3f8f 0%,#4a72bd 30%,#9db8e4 60%,rgba(200,218,244,0.6) 85%,rgba(255,255,255,0) 100%);"></div>
<div style="left:573px;top:29px;width:1px;height:70px;background:linear-gradient(to bottom,#1b3f8f 0%,#4a72bd 30%,#9db8e4 60%,rgba(200,218,244,0.6) 85%,rgba(255,255,255,0) 100%);"></div>
<div style="left:757px;top:27px;width:1px;height:107px;background:linear-gradient(to bottom,#1b3f8f 0%,#4a72bd 30%,#9db8e4 60%,rgba(200,218,244,0.6) 85%,rgba(255,255,255,0) 100%);"></div>
<div style="left:1160px;top:0px;width:16px;height:134px;background:#f0f0f0;"></div>
<div style="left:1160px;top:17px;width:15px;height:79px;background:#cdcdcd;"></div>
<svg style="left:1163px;top:4px;" width="10" height="8" viewBox="0 0 10 8"><path d="M1.500 6l3.500-3.500L8.500 6" fill="none" stroke="#505050" stroke-width="1.700"/></svg>
<svg style="left:1163px;top:122px;" width="10" height="8" viewBox="0 0 10 8"><path d="M1.500 2l3.500 3.500L8.500 2" fill="none" stroke="#505050" stroke-width="1.700"/></svg>
<svg style="left:0px;top:1px" width="90" height="130" viewBox="0 0 90 130"><defs>
<filter id="bl" x="-20%" y="-20%" width="140%" height="140%"><feGaussianBlur stdDeviation="1.1"/></filter>
<filter id="bm" x="-30%" y="-30%" width="160%" height="160%"><feGaussianBlur stdDeviation="2.2"/></filter>
<filter id="bs" x="-30%" y="-30%" width="160%" height="160%"><feGaussianBlur stdDeviation="0.55"/></filter>
<filter id="hx" x="0" y="0" width="100%" height="100%"><feTurbulence type="fractalNoise" baseFrequency="0.32 0.5" numOctaves="2" seed="7" result="n"/><feColorMatrix in="n" type="matrix" values="0 0 0 0 0.56  0 0 0 0 0.43  0 0 0 0 0.35  1.8 0 0 0 -0.7"/><feGaussianBlur stdDeviation="0.5"/></filter>
<clipPath id="hc"><path d="M9.900 54C9 42 11.500 24 20 15C28 7 40 5 50 5.700C60 6.500 70 12 73.500 22C75 28 75 36 72 42C70 34 66 30 60 28C50 26 42 28 38 34C34 40 33 48 31 52C28 58 24 62 18 64C13 63 10.500 59 9.900 54Z"/></clipPath>
<radialGradient id="fg" cx="0.6" cy="0.3" r="0.85"><stop offset="0" stop-color="#e8c6af"/><stop offset="0.4" stop-color="#cfa389"/><stop offset="0.75" stop-color="#a3745d"/><stop offset="1" stop-color="#6e4c3e"/></radialGradient>
<linearGradient id="nk" x1="0" y1="0" x2="1" y2="0.4"><stop offset="0" stop-color="#452d22"/><stop offset="0.55" stop-color="#6c4939"/><stop offset="1" stop-color="#a87860"/></linearGradient>
<linearGradient id="sh" x1="0" y1="0" x2="0" y2="1"><stop offset="0" stop-color="#e4dccb"/><stop offset="0.4" stop-color="#f2eee5"/><stop offset="0.85" stop-color="#fbfaf6"/><stop offset="1" stop-color="#ffffff"/></linearGradient>
<radialGradient id="hr" cx="0.5" cy="0.25" r="0.85"><stop offset="0" stop-color="#54403a"/><stop offset="0.55" stop-color="#3b2b25"/><stop offset="1" stop-color="#2e211c"/></radialGradient>
</defs>
<g filter="url(#bl)">
<path d="M6.600 83L13 78.500L41 102L49 91L56 104L57 124L6.600 124Z" fill="url(#sh)"/>
<path d="M18 60L33 66L50 81L47 97L41 102.500L14.500 79Z" fill="url(#nk)"/>
<path d="M9.900 54C9 42 11.500 24 20 15C28 7 40 5 50 5.700C60 6.500 70 12 73.500 22C75 28 75 36 72 42C70 34 66 30 60 28C50 26 42 28 38 34C34 40 33 48 31 52C28 58 24 62 18 64C13 63 10.500 59 9.900 54Z" fill="url(#hr)"/>
<path d="M37.500 31C44 25.500 62 25 69 30C71 36 70.500 43 70.500 49C70 53 71.500 57 70 61C68 63 67 65 66 70C65 75 62 81 57.500 82.500C50 83 43 79 38 73C34 68 31.500 58 31.500 49C32 42 34 35 37.500 31Z" fill="url(#fg)"/>
</g>
<g clip-path="url(#hc)" opacity="0.24"><rect x="8" y="4" width="68" height="62" filter="url(#hx)"/></g>
<g filter="url(#bm)" opacity="0.6">
<path d="M33 48C34 60 38 70 46 78L40 77L31 64Z" fill="#553a2e"/>
<path d="M60 62C63 60 67 60 69 62L68 66L61 66Z" fill="#8a5e4c"/>
<path d="M40 46C44 44 52 44 56 46L55 51L42 51Z" fill="#8a6250"/>
<path d="M62 46C65 44.500 69 44.500 71 46L70.500 51L63 51Z" fill="#8a6250"/>
</g>
<g filter="url(#bs)">
<path d="M41 44.200C45 42.300 51 42 56 43.500" stroke="#4a342c" stroke-width="1.500" fill="none"/>
<path d="M62.500 43.500C65 42.300 68.500 42.300 71 43.500" stroke="#4a342c" stroke-width="1.400" fill="none"/>
<path d="M44 49C47 47.600 51.500 47.600 54.500 49.200C51.500 50.300 47 50.300 44 49Z" fill="#3a2822"/>
<path d="M63.500 48.800C65.500 47.600 68.500 47.600 70.800 48.800C68.500 49.900 65.500 49.900 63.500 48.800Z" fill="#3a2822"/>
<path d="M51 70.500C55 68.800 60 68.800 64 70.200C60 73 55 73 51 70.500Z" fill="#9c5248"/>
<path d="M13 29.500C15 34 16.500 38 18.500 43" stroke="#d6cab0" stroke-width="1.600" fill="none"/>
<path d="M7.500 39C12 40.500 16 44 19 48" stroke="#d6cab0" stroke-width="1.300" fill="none"/>
<ellipse cx="20.500" cy="47" rx="4.200" ry="4.800" fill="#cdbfa3"/>
<ellipse cx="21.500" cy="47.500" rx="2" ry="2.600" fill="#a89880"/>
<path d="M21.500 54C30 63 42 71.500 52.500 76" stroke="#e2dac6" stroke-width="1.400" fill="none"/>
<ellipse cx="53.200" cy="76.600" rx="3" ry="2.300" fill="#efeadd"/>
<path d="M20 55C20.500 64 13 73 6.600 81" stroke="#d6cab0" stroke-width="1.200" fill="none"/>
</g>
</svg>
</div>
<div class="b" style="left:66px;top:718px;width:129px;height:28px;"></div>
<svg style="left:89px;top:723px;" width="16" height="16" viewBox="0 0 16 16"><defs><radialGradient id="pi" cx="0.4" cy="0.3" r="0.8"><stop offset="0" stop-color="#4f94d8"/><stop offset="1" stop-color="#0b4a98"/></radialGradient></defs><circle cx="8" cy="8.200" r="6.800" fill="url(#pi)" stroke="#0a3f85" stroke-width="0.6"/><path d="M8 3.600v5.600" stroke="#fff" stroke-width="2.400"/><circle cx="8" cy="11.900" r="1.350" fill="#fff"/></svg>
<span class="t" style="top:724.84px;font:12px/14px 'Liberation Sans',sans-serif;color:#000;letter-spacing:0.072px;left:109.00px;">Produktinfo</span>
<div class="b" style="left:197px;top:718px;width:135px;height:28px;"></div>
<svg style="left:222px;top:722px;" width="16" height="17" viewBox="0 0 16 17"><path d="M12.600 8C12.800 5.500 11.800 4 9.300 4H6" fill="none" stroke="#1e5a92" stroke-width="2.500"/><path d="M6.300 0.600L1.800 4l4.500 3.400z" fill="#1e5a92"/><path d="M3.400 9C3.200 11.500 4.200 13 6.700 13H10" fill="none" stroke="#173f6c" stroke-width="2.500"/><path d="M9.700 9.600L14.200 13l-4.500 3.400z" fill="#173f6c"/></svg>
<span class="t" style="top:724.84px;font:12px/14px 'Liberation Sans',sans-serif;color:#000;letter-spacing:0.090px;left:242.20px;">Lieferartikel</span>
<div class="b" style="left:334px;top:718px;width:129px;height:28px;"></div>
<div style="left:376px;top:724px;width:4px;height:4px;background:#d40000;"></div>
<div style="left:376px;top:729px;width:4px;height:9px;background:linear-gradient(to bottom,#6a6a6a,#a4a4a4);"></div>
<span class="t" style="top:724.84px;font:12px/14px 'Liberation Sans',sans-serif;color:#000;letter-spacing:0.139px;left:390.00px;">PRiNS</span>
<div class="b" style="left:709px;top:718px;width:123px;height:28px;"></div>
<span class="t" style="top:724.84px;font:12px/14px 'Liberation Sans',sans-serif;color:#000;letter-spacing:0.186px;left:730.85px;">Alle markieren</span>
<div class="b" style="left:837px;top:718px;width:123px;height:28px;"></div>
<span class="t" style="top:724.84px;font:12px/14px 'Liberation Sans',sans-serif;color:#000;letter-spacing:0.145px;left:860.20px;">Alle abwählen</span>
<div class="b" style="left:965px;top:718px;width:285px;height:28px;"></div>
<span class="t" style="top:724.84px;font:12px/14px 'Liberation Sans',sans-serif;color:#000;letter-spacing:0.094px;left:1013.00px;">Markierte Std.-Menge übernehmen</span>
</div></body></html>
